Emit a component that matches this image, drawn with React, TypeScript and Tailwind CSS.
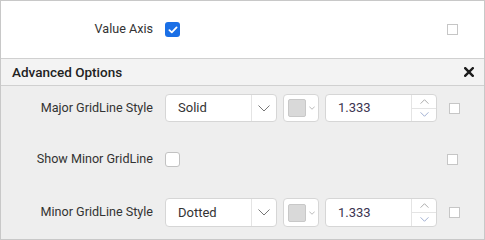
import React from 'react';

function Chevron({ up = false, className = '' }: { up?: boolean; className?: string }) {
  return (
    <svg viewBox="0 0 12 7" className={className} fill="none" stroke="currentColor" strokeWidth={1}>
      <path d={up ? 'M0.5 6.5 L6 1 L11.5 6.5' : 'M0.5 0.5 L6 6 L11.5 0.5'} />
    </svg>
  );
}

function SmallBox() {
  return <div className="w-[11px] h-[11px] border border-[#c6c6c6] bg-white" />;
}

function Label({ children }: { children: React.ReactNode }) {
  return <div className="w-[153px] shrink-0 text-right pr-px text-[12.6px]">{children}</div>;
}

function StyleRow({ label, value, tall = false }: { label: string; value: string; tall?: boolean }) {
  return (
    <div className={tall ? 'flex items-center h-[29px]' : 'flex items-center h-[28px]'}>
      <Label>{label}</Label>
      <div className="ml-[11px] w-[112px] h-full flex bg-white border border-[#d6d6d6] rounded-[4px]">
        <div className="flex-1 flex items-center pl-[12px]">{value}</div>
        <div className="w-[25px] border-l border-[#e4e4e4] flex items-center justify-center text-[#777]">
          <Chevron className="w-[12px] h-[7px]" />
        </div>
      </div>
      <div className="ml-[6px] w-[36px] h-full flex items-center bg-white border border-[#d6d6d6] rounded-[4px] pl-[4px]">
        <div className="w-[18px] h-[18px] bg-[#d9d9d9] border border-[#c8c8c8] rounded-[2px]" />
        <Chevron className="ml-[3px] w-[6px] h-[4px] text-[#777]" />
      </div>
      <div className="ml-[6px] w-[112px] h-full flex bg-white border border-[#d6d6d6] rounded-[4px]">
        <div className="flex-1 flex items-center pl-[12px] text-[#3b3450]">1.333</div>
        <div className="w-[25px] border-l border-[#e4e4e4] flex flex-col text-[#8a8a8a]">
          <div className="flex-1 flex items-center justify-center border-b border-[#e4e4e4]">
            <Chevron up className="w-[9px] h-[5px]" />
          </div>
          <div className="flex-1 flex items-center justify-center">
            <Chevron className="w-[9px] h-[5px] text-[#7a90c0]" />
          </div>
        </div>
      </div>
      <div className="ml-[12px]">
        <SmallBox />
      </div>
    </div>
  );
}

export default function App() {
  return (
    <div className="w-[485px] h-[240px] border border-[#c8c8c8] bg-white font-['Roboto',sans-serif] text-[13px] text-[#333] flex flex-col overflow-hidden">
      {/* Top row */}
      <div className="h-[58px] flex items-center border-b border-[#d0d0d0]">
        <Label>Value Axis</Label>
        <div className="ml-[11px] w-[15px] h-[15px] rounded-[3px] bg-[#1a6fe6] flex items-center justify-center">
          <svg viewBox="0 0 12 10" className="w-[10px] h-[8px]" fill="none" stroke="white" strokeWidth={2.2} strokeLinecap="round" strokeLinejoin="round">
            <path d="M1.5 5.2 L4.5 8 L10.5 1.8" />
          </svg>
        </div>
        <div className="ml-auto mr-[26px]">
          <SmallBox />
        </div>
      </div>

      {/* Advanced header */}
      <div className="h-[27px] flex items-center bg-[#f3f3f3] border-b border-[#d0d0d0] pl-[11px] pr-[10px]">
        <span className="text-[13.5px] font-medium text-[#222]">Advanced Options</span>
        <svg viewBox="0 0 10 10" className="ml-auto w-[10px] h-[10px]" stroke="#1c1c1c" strokeWidth={2.4} strokeLinecap="square">
          <path d="M1.2 1.2 L8.8 8.8 M8.8 1.2 L1.2 8.8" />
        </svg>
      </div>

      {/* Body */}
      <div className="flex-1 bg-[#eeeeee] flex flex-col pt-[8px]">
        <StyleRow label="Major GridLine Style" value="Solid" />
        <div className="flex items-center h-[28px] mt-[23px]">
          <Label>Show Minor GridLine</Label>
          <div className="ml-[11px] w-[15px] h-[15px] rounded-[3px] bg-white border border-[#c2c2c2]" />
          <div className="ml-auto mr-[26px]">
            <SmallBox />
          </div>
        </div>
        <div className="mt-[25px]">
          <StyleRow label="Minor GridLine Style" value="Dotted" tall />
        </div>
      </div>
    </div>
  );
}
